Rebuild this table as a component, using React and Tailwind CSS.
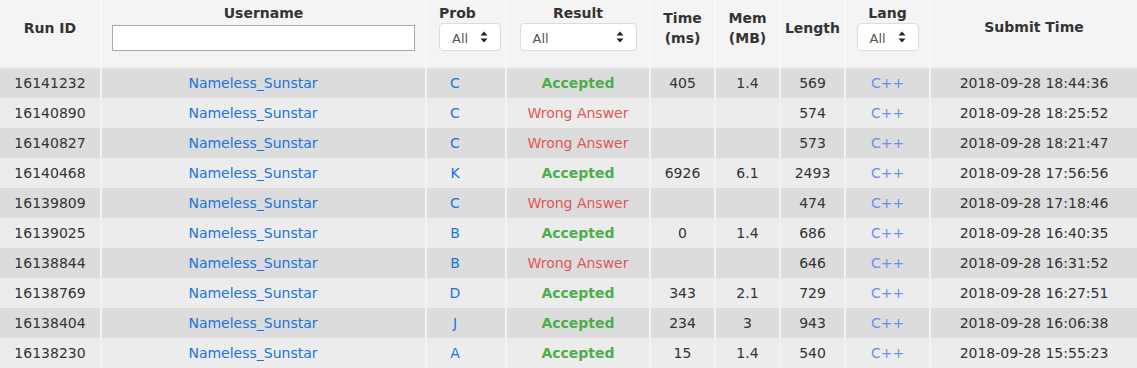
import React from "react";

const rows = [
  ["16141232", "C", "Accepted", "405", "1.4", "569", "2018-09-28 18:44:36"],
  ["16140890", "C", "Wrong Answer", "", "", "574", "2018-09-28 18:25:52"],
  ["16140827", "C", "Wrong Answer", "", "", "573", "2018-09-28 18:21:47"],
  ["16140468", "K", "Accepted", "6926", "6.1", "2493", "2018-09-28 17:56:56"],
  ["16139809", "C", "Wrong Answer", "", "", "474", "2018-09-28 17:18:46"],
  ["16139025", "B", "Accepted", "0", "1.4", "686", "2018-09-28 16:40:35"],
  ["16138844", "B", "Wrong Answer", "", "", "646", "2018-09-28 16:31:52"],
  ["16138769", "D", "Accepted", "343", "2.1", "729", "2018-09-28 16:27:51"],
  ["16138404", "J", "Accepted", "234", "3", "943", "2018-09-28 16:06:38"],
  ["16138230", "A", "Accepted", "15", "1.4", "540", "2018-09-28 15:55:23"],
];

const Arrows = () => (
  <svg width="8" height="12" viewBox="0 0 8 12" className="shrink-0">
    <path d="M4 0.5 L7.5 4.5 H0.5 Z" fill="#222" />
    <path d="M4 11.5 L7.5 7.5 H0.5 Z" fill="#222" />
  </svg>
);

const Select = ({ width, className = "mx-auto" }) => (
  <div
    className={`${className} mt-[1px] h-[28px] ${width} rounded-[4px] border border-[#dcdcdc] bg-white flex items-center justify-between pl-[12px] pr-[12px] font-normal`}
  >
    <span className="text-[13px] text-[#555] pt-[4px]">All</span>
    <Arrows />
  </div>
);

const th =
  "border-r-2 border-[#f9f9f9] align-middle text-center font-bold text-[#333] text-[14px] leading-[20px] pb-[12px] pt-0";
const td = "border-r-2 border-[#f2f2f2] text-center h-[30px] p-0";

export default function App() {
  return (
    <div
      className="w-[1137px] h-[368px] overflow-hidden bg-[#f4f4f4] text-[#333]"
      style={{ fontFamily: '"DejaVu Sans", Verdana, sans-serif' }}
    >
      <table className="w-[1137px] border-collapse table-fixed">
        <colgroup>
          <col className="w-[101px]" />
          <col className="w-[325px]" />
          <col className="w-[80px]" />
          <col className="w-[144px]" />
          <col className="w-[65px]" />
          <col className="w-[65px]" />
          <col className="w-[65px]" />
          <col className="w-[85px]" />
          <col />
        </colgroup>
        <thead>
          <tr className="h-[68px] border-b-2 border-[#eaeaea] bg-[#f4f4f4]">
            <th className={th}>Run ID</th>
            <th className={th}>
              <div className="leading-[18px]">Username</div>
              <div className="mx-auto mt-[3px] w-[303px] h-[26px] border border-[#a9a9a9] bg-white" />
            </th>
            <th className={`${th} !text-left pl-[12px]`}>
              <div className="leading-[18px]">Prob</div>
              <Select width="w-[62px]" className="ml-0" />
            </th>
            <th className={th}>
              <div className="leading-[18px]">Result</div>
              <Select width="w-[117px]" />
            </th>
            <th className={th}>
              Time
              <br />
              (ms)
            </th>
            <th className={th}>
              Mem
              <br />
              (MB)
            </th>
            <th className={th}>Length</th>
            <th className={th}>
              <div className="leading-[18px]">Lang</div>
              <Select width="w-[62px]" />
            </th>
            <th className="align-middle text-center font-bold text-[#333] text-[14px] pb-[12px] pt-0">
              Submit Time
            </th>
          </tr>
        </thead>
        <tbody className="text-[14px]">
          {rows.map((r, i) => (
            <tr key={r[0]} className={i % 2 === 0 ? "bg-[#dcdcdc]" : "bg-[#ececec]"}>
              <td className={td}>{r[0]}</td>
              <td className={`${td} text-[#1a73e0] !pr-[21px]`}>Nameless_Sunstar</td>
              <td className={`${td} text-[#1a73e0] !pr-[22px]`}>{r[1]}</td>
              <td
                className={`${td} ${
                  r[2] === "Accepted" ? "text-[#4cae4c] font-bold" : "text-[#e05555]"
                }`}
              >
                {r[2]}
              </td>
              <td className={td}>{r[3]}</td>
              <td className={td}>{r[4]}</td>
              <td className={td}>{r[5]}</td>
              <td className={`${td} text-[#6d8fe8]`}>C++</td>
              <td className="text-center h-[30px] p-0">{r[6]}</td>
            </tr>
          ))}
        </tbody>
      </table>
    </div>
  );
}
